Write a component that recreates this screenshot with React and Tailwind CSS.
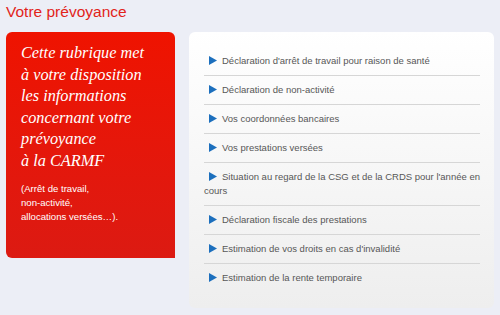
import React from "react";

const items = [
  "Déclaration d'arrêt de travail pour raison de santé",
  "Déclaration de non-activité",
  "Vos coordonnées bancaires",
  "Vos prestations versées",
  "Situation au regard de la CSG et de la CRDS pour l'année en cours",
  "Déclaration fiscale des prestations",
  "Estimation de vos droits en cas d'invalidité",
  "Estimation de la rente temporaire",
];

function Arrow() {
  return (
    <svg
      className="inline-block ml-[5px] mr-[5px] align-[-1px]"
      width="8"
      height="9"
      viewBox="0 0 8 9"
    >
      <polygon points="0,0 8,4.5 0,9" fill="#1c6fbd" />
    </svg>
  );
}

export default function App() {
  return (
    <div
      className="w-[500px] h-[315px] bg-[#eceef6] overflow-hidden"
      style={{ fontFamily: '"Liberation Sans", Arial, sans-serif' }}
    >
      <h1 className="pl-[6px] pt-[2px] h-[32px] text-[15.5px] leading-[20px] text-[#e2231a]">
        Votre prévoyance
      </h1>
      <div className="flex items-start gap-[14px] pl-[6px]">
        <div className="w-[169px] h-[226px] rounded-tl-[6px] rounded-tr-[6px] rounded-bl-[6px] bg-gradient-to-b from-[#ef1300] to-[#dc1a12] pl-[15px] pr-[8px] pt-[10px] text-white">
          <p
            className="italic text-[16.3px] leading-[21.5px]"
            style={{ fontFamily: '"Liberation Serif", Georgia, serif' }}
          >
            Cette rubrique met
            <br />à votre disposition
            <br />
            les informations
            <br />
            concernant votre
            <br />
            prévoyance
            <br />à la CARMF
          </p>
          <p className="mt-[11px] text-[9.6px] leading-[14px]">
            (Arrêt de travail,
            <br />
            non-activité,
            <br />
            allocations versées…).
          </p>
        </div>
        <div className="w-[305px] h-[276px] rounded-[6px] bg-gradient-to-b from-white to-[#eeeeee] pl-[15px] pr-[14px] pt-[15px]">
          {items.map((t, i) => (
            <div
              key={i}
              className={
                "py-[7px] text-[9.5px] leading-[14px] text-[#575757] " +
                (i < items.length - 1 ? "border-b border-[#d6d6d6]" : "")
              }
            >
              <Arrow />
              {t}
            </div>
          ))}
        </div>
      </div>
    </div>
  );
}
